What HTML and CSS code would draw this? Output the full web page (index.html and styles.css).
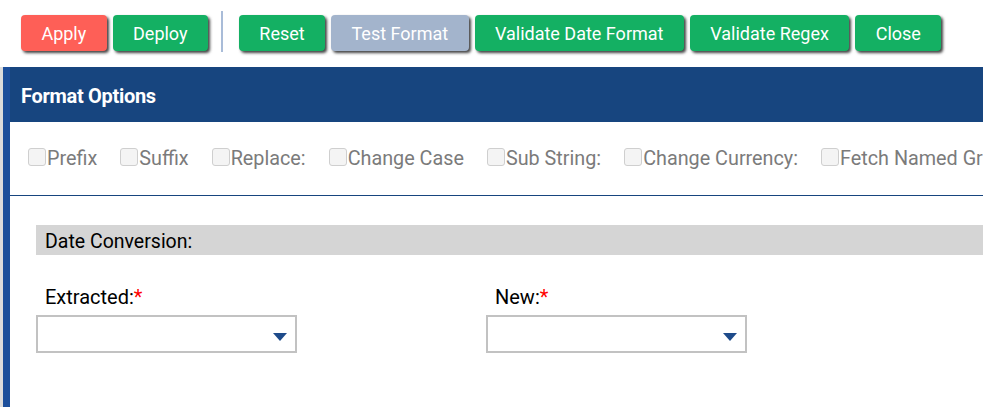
FILE: index.html
```html
<!DOCTYPE html>
<html>
<head>
<meta charset="utf-8">
<link rel="stylesheet" href="styles.css">
</head>
<body>
<div class="page">
  <div class="toolbar">
    <button class="btn btn-red">Apply</button>
    <button class="btn btn-green">Deploy</button>
    <span class="sep"></span>
    <button class="btn btn-green">Reset</button>
    <button class="btn btn-gray">Test Format</button>
    <button class="btn btn-green">Validate Date Format</button>
    <button class="btn btn-green">Validate Regex</button>
    <button class="btn btn-green">Close</button>
  </div>
  <div class="frame">
    <div class="panel">
      <div class="panel-head">Format Options</div>
      <div class="opts">
        <label class="opt"><span class="cb"></span>Prefix</label>
        <label class="opt"><span class="cb"></span>Suffix</label>
        <label class="opt"><span class="cb"></span>Replace:</label>
        <label class="opt"><span class="cb"></span>Change Case</label>
        <label class="opt"><span class="cb"></span>Sub String:</label>
        <label class="opt"><span class="cb"></span>Change Currency:</label>
        <label class="opt"><span class="cb"></span>Fetch Named Groups</label>
      </div>
      <div class="section">
        <div class="section-title">Date Conversion:</div>
        <div class="fields">
          <div class="field">
            <div class="flabel">Extracted:<span class="req">*</span></div>
            <div class="select"><svg class="arrow" width="14" height="8" viewBox="0 0 14 8"><path d="M0 0H14L7 8Z" fill="#1e4b8a"/></svg></div>
          </div>
          <div class="field">
            <div class="flabel">New:<span class="req">*</span></div>
            <div class="select"><svg class="arrow" width="14" height="8" viewBox="0 0 14 8"><path d="M0 0H14L7 8Z" fill="#1e4b8a"/></svg></div>
          </div>
        </div>
      </div>
    </div>
  </div>
</div>
</body>
</html>
```

FILE: styles.css
```css
html, body {
  margin: 0;
  padding: 0;
  background: #fff;
  overflow: hidden;
}
.page {
  width: 983px;
  height: 407px;
  font-family: Roboto, "Liberation Sans", sans-serif;
  overflow: hidden;
}
.toolbar {
  height: 67px;
  box-sizing: border-box;
  padding: 15px 0 0 21px;
  display: flex;
  align-items: flex-start;
}
.btn {
  height: 36px;
  border: none;
  border-radius: 4px;
  color: #fff;
  font-family: Roboto, "Liberation Sans", sans-serif;
  font-size: 18px;
  padding: 0 20.4px;
  margin-right: 6px;
  box-shadow: 2px 2px 3px rgba(0,0,0,0.75);
  cursor: pointer;
}
.btn-red { background: #fe5f57; }
.btn-green { background: #14b063; }
.btn-gray { background: #a3b4cc; }
.sep {
  width: 2px;
  height: 41px;
  margin: -4px 16px 0 7px;
  background: #a9bcd8;
}
.frame {
  height: 340px;
  border-left: 3px solid #dcdcdc;
  box-sizing: border-box;
}
.panel {
  height: 100%;
  border-left: 7px solid #1c4f9b;
}
.panel-head {
  height: 55px;
  background: #17457f;
  color: #fff;
  font-weight: bold;
  font-size: 20px;
  line-height: 58px;
  padding-left: 11px;
  letter-spacing: -0.3px;
}
.opts {
  height: 73px;
  border-bottom: 1px solid #17457f;
  display: flex;
  align-items: center;
  padding-left: 18px;
  white-space: nowrap;
  color: #7b7b7b;
  font-size: 19.8px;
  overflow: hidden;
}
.opt {
  display: flex;
  align-items: center;
  margin-right: 23px;
}
.cb {
  width: 16px;
  height: 16px;
  border: 1px solid #cfcfcf;
  border-radius: 3px;
  background: #f4f4f4;
  margin-right: 1px;
  margin-top: -4px;
}
.section {
  padding: 29px 0 0 26px;
}
.section-title {
  height: 30px;
  background: #d5d5d5;
  color: #000;
  font-size: 19.5px;
  line-height: 34px;
  padding-left: 9px;
}
.fields {
  display: grid;
  grid-template-columns: 450px 450px;
  padding-top: 30px;
}
.flabel {
  padding-left: 9px;
  color: #000;
  font-size: 20px;
  height: 30px;
  line-height: 24px;
}
.req {
  color: #ff0000;
}
.select {
  width: 261px;
  height: 38px;
  box-sizing: border-box;
  border: 2px solid #c2c2c2;
  background: #fff;
  display: flex;
  align-items: center;
  justify-content: flex-end;
  padding: 6px 8px 0 0;
}
```
